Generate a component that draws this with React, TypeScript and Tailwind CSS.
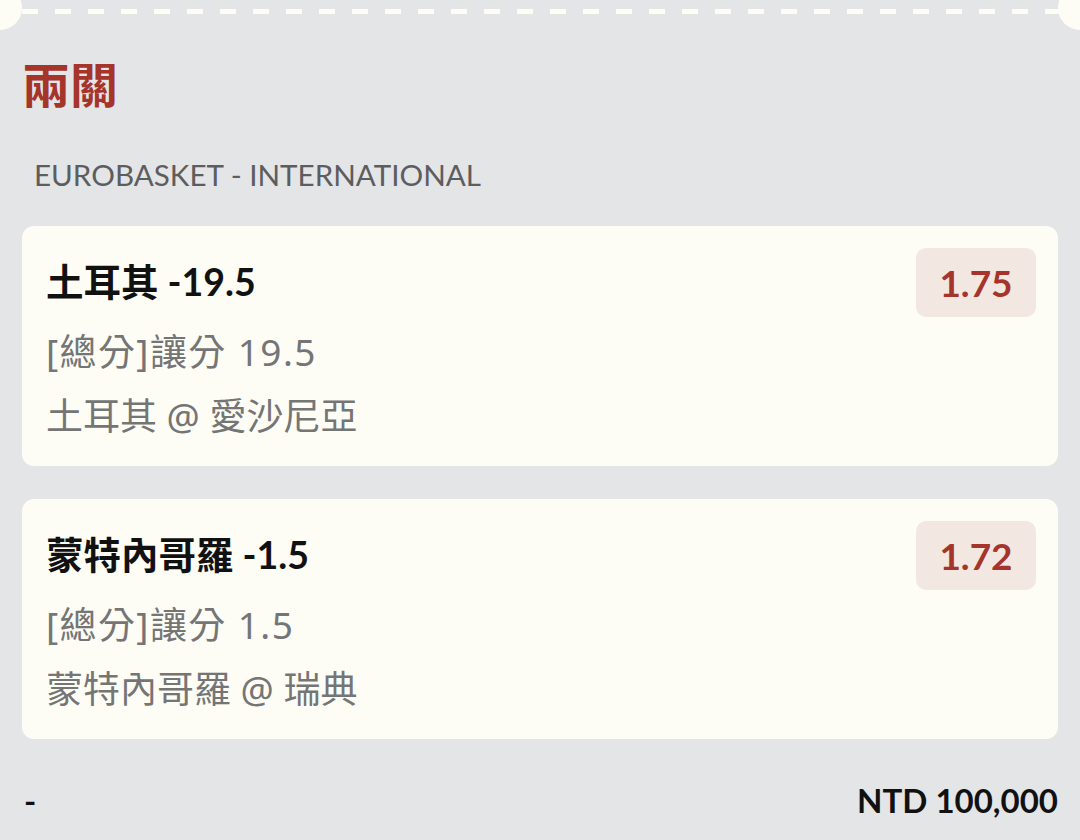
const FONT = "font-['Lato','Noto_Sans_CJK_TC',sans-serif]";
const SUB = "font-['Noto_Sans','Noto_Sans_CJK_TC',sans-serif]";

type Bet = {
  title: string;
  market: string;
  match: string;
  odds: string;
};

const bets: Bet[] = [
  { title: "土耳其 -19.5", market: "[總分]讓分 19.5", match: "土耳其 @ 愛沙尼亞", odds: "1.75" },
  { title: "蒙特內哥羅 -1.5", market: "[總分]讓分 1.5", match: "蒙特內哥羅 @ 瑞典", odds: "1.72" },
];

const TicketEdge = () => {
  return (
    <div className="relative h-[30px]">
      {/* perforation */}
      <div className="flex gap-[17px] pl-[22px] pt-[9px]">
        {Array.from({ length: 32 }).map((_, i) => (
          <div key={i} className="h-[5px] w-[16px] shrink-0 bg-[#fdfdf6]" />
        ))}
      </div>
      <div className="absolute left-[-22px] top-[-14px] h-[44px] w-[44px] rounded-full bg-[#fdfdf6]" />
      <div className="absolute right-[-22px] top-[-14px] h-[44px] w-[44px] rounded-full bg-[#fdfdf6]" />
    </div>
  );
};

const BetCard = ({ bet }: { bet: Bet }) => {
  return (
    <div className="flex rounded-[12px] bg-[#fdfdf6] pl-[24px] pr-[22px] pt-[22px] pb-[18px]">
      <div className="flex-1">
        <div className="flex h-[69px] items-center text-[37.5px] font-bold text-[#111]">
          {bet.title}
        </div>
        <div className={`${SUB} mt-[3px] text-[37px] leading-[64px] tracking-[1.4px] text-[#757575]`}>
          {bet.market}
        </div>
        <div className={`${SUB} text-[37px] leading-[64px] text-[#757575]`}>{bet.match}</div>
      </div>
      <div className="flex h-[69px] w-[120px] items-center justify-center rounded-[10px] bg-[#f3e7e1] text-[37px] font-bold text-[#a5352b]">
        {bet.odds}
      </div>
    </div>
  );
};

export default function App() {
  return (
    <div className={`${FONT} h-[840px] w-[1080px] overflow-hidden bg-[#e4e5e7]`}>
      <TicketEdge />
      <div className="px-[22px]">
        <div className="mt-[27px] text-[48px] font-bold leading-[56px] text-[#a5352b]">兩關</div>
        <div className="mt-[42px] pl-[12px] text-[29.6px] leading-[40px] text-[#5c5d5f]">
          EUROBASKET - INTERNATIONAL
        </div>
        <div className="mt-[31px] flex flex-col gap-[33px]">
          {bets.map((b) => (
            <BetCard key={b.title} bet={b} />
          ))}
        </div>
        <div className="mt-[41px] flex items-center justify-between text-[33px] font-bold leading-[40px] text-[#111]">
          <span className="pl-[2px]">-</span>
          <span>NTD 100,000</span>
        </div>
      </div>
    </div>
  );
}
